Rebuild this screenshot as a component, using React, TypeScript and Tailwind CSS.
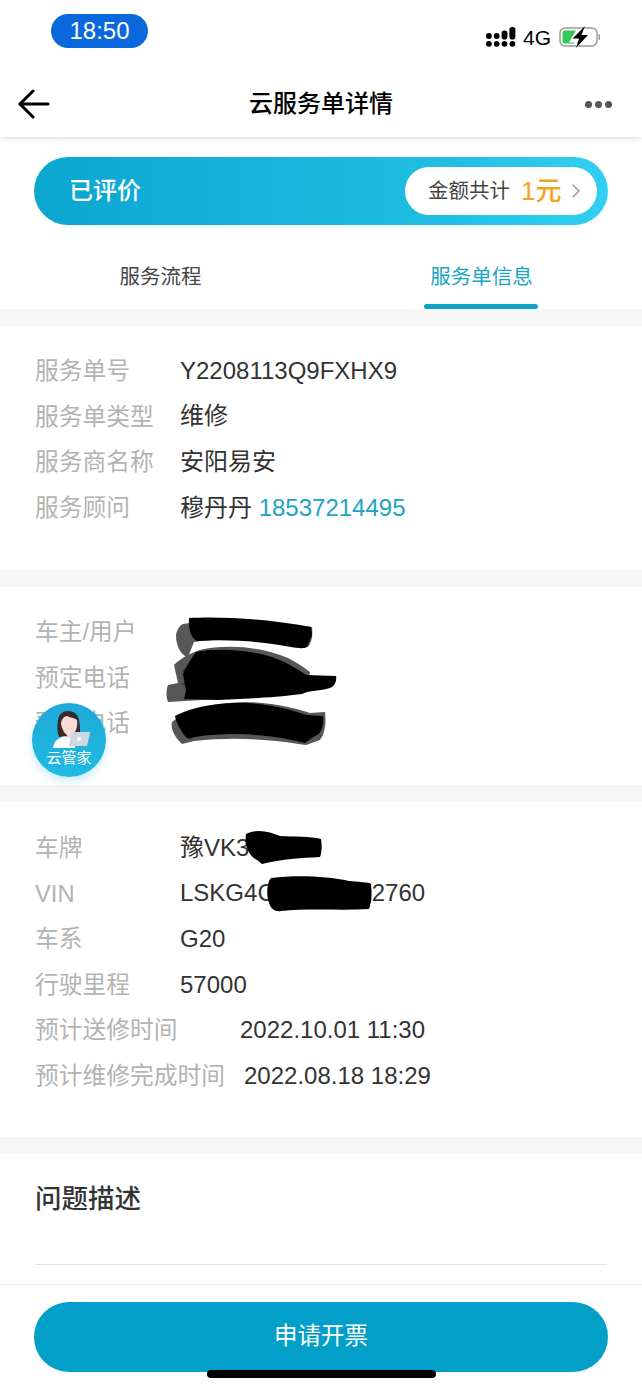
import type { ReactNode } from 'react'
import { ChevronRight } from 'lucide-react'

const FONT = 'font-["Liberation_Sans","Noto_Sans_CJK_SC",sans-serif]'

function BackArrow() {
  return (
    <svg viewBox="0 0 32 30" className="h-[30px] w-[32px]" fill="none" stroke="#000" strokeWidth="3" strokeLinecap="round" strokeLinejoin="round">
      <path d="M2 15h28" />
      <path d="M15 2 2 15l13 13" />
    </svg>
  )
}

function SignalIcon() {
  return (
    <svg viewBox="0 0 30 20" className="h-[20px] w-[30px]" fill="#000">
      <circle cx="2.9" cy="9" r="2.9" />
      <circle cx="2.9" cy="16.8" r="2.9" />
      <circle cx="10.7" cy="9" r="2.9" />
      <circle cx="10.7" cy="16.8" r="2.9" />
      <rect x="15.6" y="3.5" width="5.8" height="9" rx="2.8" />
      <circle cx="18.5" cy="16.8" r="2.9" />
      <rect x="23.4" y="0" width="6" height="12.5" rx="2.8" />
      <circle cx="26.4" cy="16.8" r="2.9" />
    </svg>
  )
}

function BatteryIcon() {
  return (
    <svg viewBox="0 0 41 22" className="h-[22px] w-[41px]">
      <rect x="1" y="2" width="37" height="18" rx="5" fill="none" stroke="#9a9a9a" strokeWidth="1.5" />
      <path d="M6 4.5h11l-7 12h5v1H6a2.5 2.5 0 0 1-2.5-2.5V7A2.5 2.5 0 0 1 6 4.5z" fill="#35c759" />
      <rect x="39.5" y="8" width="1.5" height="6" rx="0.75" fill="#9a9a9a" />
      <path d="M26 0 13.5 12.5h6.5L17 22l12-13h-6.5z" fill="#000" />
    </svg>
  )
}

function InfoRow({ label, children, labelWidth = 'w-[145px]' }: { label: string; children?: ReactNode; labelWidth?: string }) {
  return (
    <div className="flex h-[45.6px] items-center">
      <span className={`${labelWidth} shrink-0 text-[23.75px] text-[#b3b3b3]`}>{label}</span>
      <span className="text-[24px] text-[#333]">{children}</span>
    </div>
  )
}

function Gap() {
  return <div className="h-[17px] shrink-0 bg-[#f6f6f6]" />
}

function AgentAvatar() {
  return (
    <div className="absolute left-[32px] top-[703px] flex h-[74px] w-[74px] flex-col items-center overflow-hidden rounded-full bg-gradient-to-b from-[#1fa9d8] to-[#1fbae2] shadow-[0_4px_8px_rgba(30,170,220,0.25)]">
      <svg viewBox="0 0 74 46" className="h-[46px] w-[74px] shrink-0">
        <path d="M21 45c1-8 6-11 14-12l8 2v10z" fill="#fff" />
        <path d="M27 34c-2-6-2-11-1-17 1-6 5-9 10-9s10 3 11 9c1 5 1 9 1 13l-8 4-8-1z" fill="#3a2a2c" />
        <path d="M29 21c0-4 3-8 6-8 4 2 8 2 10 4 1 6-1 13-6 16v2l-4 0v-3c-3-2-5-6-6-11z" fill="#f7dcd6" />
        <path d="M39 30.5c0-.8.7-1.5 1.5-1.5H57c.8 0 1.2.7 1 1.5L55 43H37z" fill="#cfd8de" />
        <circle cx="47" cy="36" r="2" fill="#fff" />
      </svg>
      <span className="text-[15px] leading-[18px] text-white">云管家</span>
    </div>
  )
}

function Scribbles() {
  return (
    <svg viewBox="0 0 642 1389" className="pointer-events-none absolute left-0 top-0 h-[1389px] w-[642px] blur-[0.6px]" fill="#000">
      {/* soft edge layer */}
      <g fill="#3a3a3a" opacity="0.85">
        <path d="M183 624c30-4 80-3 129 3 1 8 0 15-4 20-40-8-80-10-114-5l-6 15c-8-2-12-12-12-22 1-5 3-9 7-11z" />
        <path d="M200 650c25-6 60-4 88 8 10 5 18 11 22 14l-4 18c-30 6-70 8-104 10l-34 2c-2-5-2-12 0-17l10-2-4-18c6-6 14-11 26-15z" />
        <path d="M172 722c12-10 40-19 72-20 30 0 58 8 66 11l15-1c1 8 1 20-5 28l-14 5c-30-5-70-9-112-4l-12 3c-6-6-12-14-10-22z" />
      </g>
      <path d="M189 618c30-2 82 1 122 9l1 8-5 12c-3 2-10 1-16 0-25-5-60-8-94-6-5-3-9-10-8-23z" />
      <path d="M196 652c20-4 50-3 76 5 14 5 26 12 34 18l30 1c1 4-1 10-6 12-10 3-20 2-28 6-30 4-50 4-84 6l-34-1 2-8-3-17c3-8 8-15 13-22z" />
      <path d="M175 716c14-8 40-14 70-13 28 1 50 8 62 12l16 1c1 6 0 12-4 18-6 3-10 6-14 9-30-8-70-12-110-6-4 2-8 2-10-1-4-5-9-14-10-20z" />
      <path d="M246 834c12-6 24-2 34 2 14 1 30 0 41 3 1 6 1 13-1 18-18 1-38 2-58 7l-5-4c-7-3-13-14-11-26z" />
      <path d="M271 878c25-3 55-2 78 3 8 1 20 1 22 3 1 9 1 17-2 25-28 2-58-1-88 2-6 1-10-2-12-8-3-8-2-21 2-25z" />
    </svg>
  )
}

export default function App() {
  return (
    <div className={`relative flex h-[1389px] w-[642px] flex-col overflow-hidden bg-white ${FONT}`}>
      {/* status bar */}
      <div className="relative flex h-[68px] shrink-0 items-start justify-between pl-[51px] pr-[42px]">
        <div className="mt-[14px] flex h-[34px] w-[97px] items-center justify-center rounded-full bg-[#0a68dc] text-[24px] text-white">
          18:50
        </div>
        <div className="mt-[26px] flex items-center">
          <SignalIcon />
          <span className="ml-[7px] mr-[8px] text-[21px] leading-none text-black">4G</span>
          <BatteryIcon />
        </div>
      </div>

      {/* title bar */}
      <div className="relative z-10 flex h-[69px] shrink-0 items-center justify-between bg-white pl-[18px] pr-[30px] pt-[3px] shadow-[0_3px_5px_-1px_rgba(0,0,0,0.13)]">
        <div className="w-[39px]">
          <BackArrow />
        </div>
        <h1 className="text-[24px] font-medium text-black">云服务单详情</h1>
        <div className="flex w-[27px] justify-between">
          <span className="h-[7px] w-[7px] rounded-full bg-[#555]" />
          <span className="h-[7px] w-[7px] rounded-full bg-[#555]" />
          <span className="h-[7px] w-[7px] rounded-full bg-[#555]" />
        </div>
      </div>

      {/* status banner */}
      <div className="shrink-0 px-[34px] pt-[20px]">
        <div className="flex h-[68px] items-center justify-between rounded-full bg-gradient-to-r from-[#0aa6d0] via-[#1fbde2] via-70% to-[#31d0f3] pl-[35px] pr-[11px]">
          <span className="text-[24px] font-medium text-white">已评价</span>
          <div className="flex h-[48px] w-[192px] items-center rounded-full bg-white pl-[23px]">
            <span className="text-[20.5px] text-[#444]">金额共计</span>
            <span className="ml-[11px] text-[26px] font-medium leading-none text-[#f5a31a]">1元</span>
            <ChevronRight size={24} strokeWidth={1.5} color="#999" className="ml-[3px]" />
          </div>
        </div>
      </div>

      {/* tabs */}
      <div className="flex h-[84px] shrink-0 text-[20.5px]">
        <div className="flex w-[321px] items-center justify-center pt-[20px] text-[#444]">服务流程</div>
        <div className="relative flex w-[321px] items-center justify-center pt-[20px] text-[#18a3c9]">
          服务单信息
          <span className="absolute bottom-0 left-[103px] h-[5px] w-[114px] rounded-full bg-[#0fa0c8]" />
        </div>
      </div>

      <Gap />
      <section className="h-[244px] shrink-0 px-[35px] pt-[22px]">
        <InfoRow label="服务单号">Y2208113Q9FXHX9</InfoRow>
        <InfoRow label="服务单类型">维修</InfoRow>
        <InfoRow label="服务商名称">安阳易安</InfoRow>
        <InfoRow label="服务顾问">
          穆丹丹 <span className="text-[#22a2c4]">18537214495</span>
        </InfoRow>
      </section>

      <Gap />
      <section className="h-[198px] shrink-0 px-[35px] pt-[22px]">
        <InfoRow label="车主/用户" />
        <InfoRow label="预定电话">1</InfoRow>
        <InfoRow label="预约电话" />
      </section>

      <Gap />
      <section className="h-[335px] shrink-0 px-[35px] pt-[23px]">
        <InfoRow label="车牌">豫VK3</InfoRow>
        <InfoRow label="VIN">
          LSKG4C<span className="inline-block w-[97px]" />2760
        </InfoRow>
        <InfoRow label="车系">G20</InfoRow>
        <InfoRow label="行驶里程">57000</InfoRow>
        <InfoRow label="预计送修时间" labelWidth="w-[205px]">2022.10.01 11:30</InfoRow>
        <InfoRow label="预计维修完成时间" labelWidth="w-[209px]">2022.08.18 18:29</InfoRow>
      </section>

      <Gap />
      <section className="min-h-0 flex-1 px-[35px] pt-[28px]">
        <h2 className="text-[26.5px] font-medium leading-[34px] text-[#333]">问题描述</h2>
        <div className="mt-[48px] h-px bg-[#e2e2e2]" />
      </section>

      {/* footer */}
      <div className="flex h-[105px] shrink-0 justify-center border-t border-[#ececec] bg-white px-[34px] pt-[17px]">
        <button type="button" className="h-[70px] w-full rounded-full bg-[#02a0c9] text-[23.5px] text-white">
          申请开票
        </button>
      </div>

      <Scribbles />
      <AgentAvatar />
      <div className="absolute left-[207px] top-[1370px] h-[8px] w-[229px] rounded-full bg-black" />
    </div>
  )
}
